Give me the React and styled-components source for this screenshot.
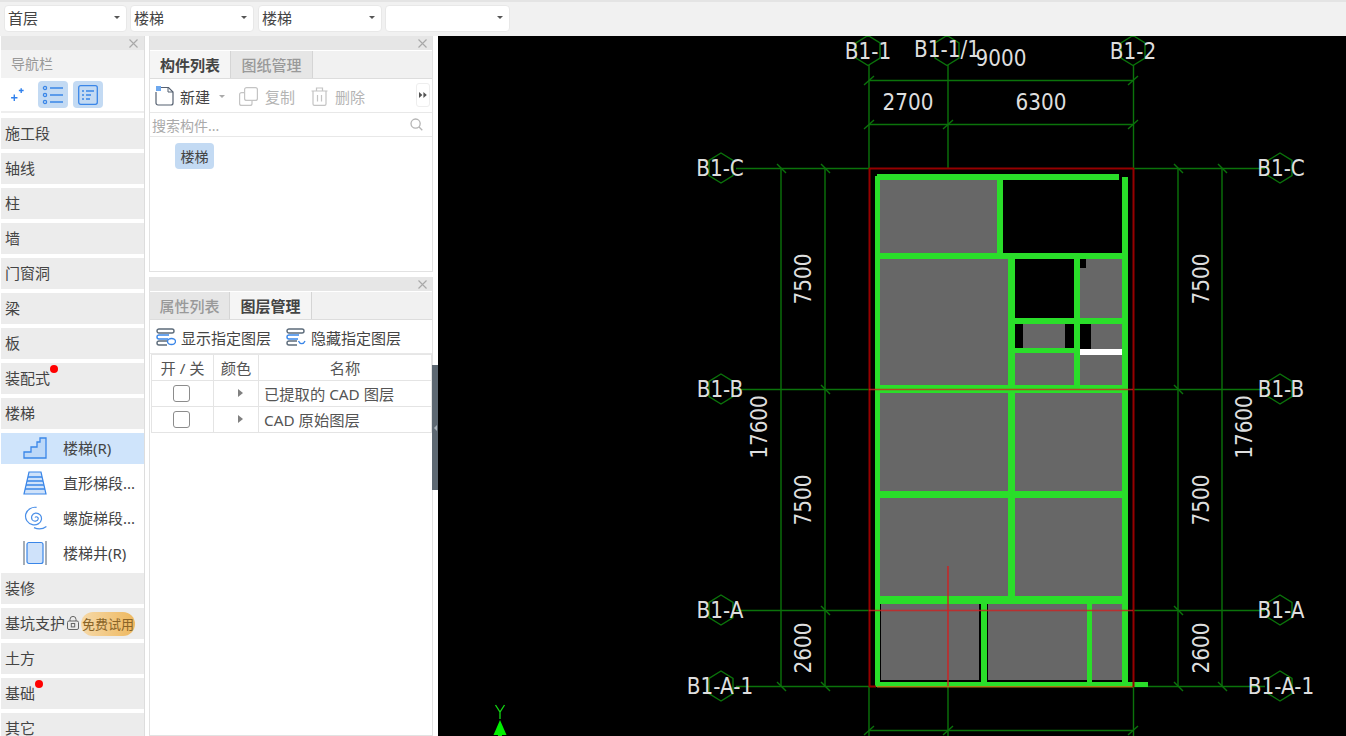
import React from "react";
import styled, { createGlobalStyle } from "styled-components";

const Global = createGlobalStyle`
  html, body { margin: 0; padding: 0; height: 736px; overflow: hidden; background: #fff; }
  * { box-sizing: border-box; }
  body { font-family: "Noto Sans", "Noto Sans CJK SC", sans-serif; color: #444; }
`;

const Page = styled.div`
  width: 1346px; height: 736px; display: flex; flex-direction: column; overflow: hidden;
`;
const TopBar = styled.div`
  height: 36px; flex: none; display: flex; align-items: flex-start; gap: 3px;
  padding: 3px 0 0 4px; background: #f1f1f1; border-top: 2px solid #e4e4e4;
`;
const Select = styled.div`
  width: ${p => p.$w}px; height: 27px; background: #fff; border: 1px solid #e8e8e8; border-radius: 4px;
  display: flex; align-items: center; padding: 0 6px 2px 3px;
  font-size: 15px; color: #444; margin-right: ${p => p.$mr || 0}px;
`;
const Caret = styled.i`
  margin-left: auto; width: 0; height: 0; border-left: 3px solid transparent; border-right: 3px solid transparent;
  border-top: 3px solid ${p => p.$c || "#555"};
`;
const Main = styled.div`
  flex: 1; min-height: 0; display: flex; background: #fff;
`;
const Left = styled.aside`
  width: 144px; flex: none; margin-left: 1px; border-right: 1px solid #ddd; overflow: hidden; background: #fff;
`;
const CloseBar = styled.div`
  height: 14px; background: #e6e6e6; display: flex; justify-content: flex-end; align-items: center;
  padding-right: ${p => p.$pr || 6}px;
`;
const NavTitle = styled.div`
  height: 28px; background: #f2f2f2; font-size: 14px; color: #999; padding: 0 0 2px 10px;
  display: flex; align-items: center;
`;
const NavTools = styled.div`
  height: 35px; display: flex; align-items: center; padding-left: 9px; border-bottom: 2px solid #eee;
`;
const ToolBtn = styled.div`
  width: 30px; height: 27px; border-radius: 4px; background: #c3daf3; display: flex; align-items: center; justify-content: center;
  margin-left: ${p => p.$ml}px;
`;
const Groups = styled.div`
  display: flex; flex-direction: column; padding-top: 5px;
`;
const Group = styled.div`
  position: relative; height: 31px; margin-bottom: 4px; background: #ececec; font-size: 15px; color: #444;
  display: flex; align-items: center; padding: 0 0 2px 4px; white-space: nowrap;
`;
const Dot = styled.i`
  position: absolute; left: ${p => p.$x}px; top: 2px; width: 8px; height: 8px; border-radius: 50%; background: #f00;
`;
const Item = styled.div`
  height: 31px; margin-bottom: 4px; display: flex; align-items: center; font-size: 15px; color: #444; padding-bottom: 2px;
  background: ${p => (p.$on ? "#cfe4fb" : "transparent")}; white-space: nowrap;
`;
const ItemIcon = styled.span`
  width: 62px; flex: none; display: flex; justify-content: center; padding-left: 5px;
`;
const Lock = styled.span`
  display: inline-flex; margin: 0 2px;
`;
const Trial = styled.span`
  height: 24px; width: 54px; border-radius: 12px; background: linear-gradient(90deg, #f6d9a8, #eeb85f);
  color: #8a6428; font-size: 13px; line-height: 24px; text-align: center; margin-top: 2px;
`;
const Middle = styled.div`
  width: 284px; flex: none; margin-left: 4px; display: flex; flex-direction: column; gap: 5px;
`;
const Panel = styled.section`
  height: ${p => (p.$h ? p.$h + "px" : "auto")}; flex: ${p => (p.$h ? "none" : 1)};
  border: 1px solid #e2e2e2; border-top: 0; display: flex; flex-direction: column; min-height: 0;
`;
const TabRow = styled.div`
  height: 28px; margin-top: 1px; flex: none; display: flex; background: #f1f1f1; border-bottom: 1px solid #ddd;
`;
const Tab = styled.div`
  width: ${p => p.$w}px; font-size: 15px; font-weight: ${p => (p.$on ? 700 : 500)};
  color: ${p => (p.$on ? "#444" : "#999")}; background: ${p => (p.$on ? "#f5f5f5" : "#e6e6e6")};
  border-right: 1px solid #d5d5d5; display: flex; align-items: center; justify-content: center;
`;
const Tools = styled.div`
  height: 34px; flex: none; display: flex; align-items: center; padding: 1px 0 0 5px; border-bottom: 1px solid #e8e8e8; position: relative;
`;
const Tool = styled.span`
  display: flex; align-items: center; gap: ${p => p.$g ?? 7}px; font-size: 15px; color: ${p => (p.$off ? "#b4b4b4" : "#444")};
  margin-left: ${p => p.$ml || 0}px;
`;
const More = styled.span`
  position: absolute; right: 2px; top: 4px; width: 14px; height: 24px; border: 1px solid #eee; border-radius: 3px; background: #fff;
  display: flex; align-items: center; justify-content: center;
`;
const Search = styled.div`
  height: 24px; flex: none; display: flex; align-items: center; justify-content: space-between;
  padding: 0 9px 0 2px; font-size: 14px; color: #aaa; border-bottom: 1px solid #e8e8e8;
`;
const TagWrap = styled.div`
  padding: 6px 0 0 25px;
`;
const Tag = styled.span`
  display: inline-flex; width: 39px; height: 26px; background: #c3daf3; border-radius: 4px; font-size: 14px;
  align-items: center; justify-content: center; color: #444;
`;
const Table = styled.div`
  display: grid; grid-template-columns: 63px 45px 173px; grid-auto-rows: 26px; margin-left: 1px; width: 281px;
  border-top: 1px solid #e6e6e6;
`;
const Cell = styled.div`
  border-right: 1px solid #e4e4e4; border-bottom: 1px solid #e4e4e4; border-left: ${p => (p.$first ? "1px solid #e4e4e4" : 0)};
  font-size: 15.3px; color: #555; display: flex; align-items: center; padding-bottom: 1px;
  justify-content: ${p => (p.$start ? "flex-start" : "center")}; padding-left: ${p => (p.$start ? 5 : 0)}px; white-space: nowrap;
`;
const Check = styled.i`
  width: 17px; height: 17px; margin: 1px 3px 0 0; border: 1px solid #8c8c8c; border-radius: 3px; background: #fff;
`;
const Tri = styled.i`
  margin-left: 8px; width: 0; height: 0; border-top: 4px solid transparent; border-bottom: 4px solid transparent; border-left: 5px solid #808080;
`;
const Splitter = styled.div`
  width: 5px; flex: none; background: #fff; position: relative;
`;
const Handle = styled.div`
  position: absolute; left: -1px; top: 329px; width: 6px; height: 125px; background: #5d6872;
  display: flex; align-items: center; justify-content: center;
`;
const HandleArrow = styled.i`
  width: 0; height: 0; border-top: 3px solid transparent; border-bottom: 3px solid transparent; border-right: 3px solid #aab2ba;
`;
const Canvas = styled.div`
  flex: 1; min-width: 0; background: #000; overflow: hidden;
`;
const Drawing = styled.svg`
  display: block;
  text { font-family: "DejaVu Sans", sans-serif; font-size: 23px; fill: #dedede; }
`;

const Close = () => (
  <svg width="9" height="9" viewBox="0 0 9 9" stroke="#a8a8a8" strokeWidth="1.1"><path d="M.5 .5L8.5 8.5M8.5 .5L.5 8.5" /></svg>
);

/* drawing data in page pixels */
const GREY = [
  [880, 180, 117, 73], [880, 259, 128, 126], [1080, 259, 42, 59], [1015, 324, 59, 24], [1080, 324, 42, 25],
  [1015, 353, 59, 32], [1080, 355, 42, 30], [880, 393, 128, 98], [1015, 393, 107, 98], [880, 498, 128, 98],
  [1015, 498, 107, 98], [881, 604, 98, 76], [988, 604, 99, 76], [1092, 604, 30, 76],
];
const BLACK = [
  [1080, 259, 6, 9], [1015, 324, 8, 24], [1065, 324, 9, 24], [1080, 324, 11, 25],
];
const WALLS = [
  [875, 176, 5, 511], [877, 174, 242, 6], [1122, 177, 6, 510], [997, 178, 6, 77], [876, 253, 250, 6],
  [1008, 257, 7, 340], [1074, 257, 6, 128], [1015, 318, 107, 6], [1015, 348, 59, 5], [877, 385, 250, 8],
  [877, 491, 248, 7], [877, 596, 248, 8], [981, 604, 6, 80], [1087, 604, 5, 80], [875, 682, 273, 5],
];
const GRID = "#0b730b";
const HEX = [
  [868, 50.5], [947, 50.5], [1133, 50.5],
  [721, 168], [1280, 168], [721, 389], [1280, 389], [721, 610], [1280, 610], [721, 686], [1280, 686],
];
const hexPts = (cx, cy, r = 15) =>
  [0, 1, 2, 3, 4, 5].map(i => {
    const a = (Math.PI / 3) * i - Math.PI / 2;
    return `${(cx + r * Math.cos(a) * 0.92).toFixed(1)},${(cy + r * Math.sin(a)).toFixed(1)}`;
  }).join(" ");
const LABELS = [
  ["B1-1", 868, 51], ["B1-1/1", 947, 49], ["9000", 1001, 58], ["B1-2", 1133, 51],
  ["2700", 908, 102], ["6300", 1041, 102],
  ["B1-C", 720, 168], ["B1-C", 1281, 168], ["B1-B", 720, 389], ["B1-B", 1281, 389],
  ["B1-A", 720, 610], ["B1-A", 1281, 610], ["B1-A-1", 720, 686], ["B1-A-1", 1281, 686],
];
const ROTATED = [
  ["7500", 803, 279], ["17600", 759, 427], ["7500", 803, 500], ["2600", 803, 648],
  ["7500", 1201, 279], ["17600", 1244, 427], ["7500", 1201, 500], ["2600", 1201, 648],
];
const V_TICKS = [
  [781, 168], [781, 686], [825, 168], [825, 389], [825, 610], [825, 686],
  [1178, 168], [1178, 389], [1178, 610], [1178, 686], [1222, 168], [1222, 686],
];
const H_TICKS = [
  [869, 80], [1133, 80], [869, 124], [948, 124], [1133, 124], [869, 730], [948, 730], [1133, 730],
];

const Plan = () => (
  <Drawing width="908" height="700" viewBox="438 36 908 700">
    <g stroke={GRID} strokeWidth="1.4" fill="none">
      <path d="M869 65V168M948 65V168M1133.5 65V168M869 686V736M948 686V736M1133.5 686V736" />
      <path d="M869 80.5H1133M869 124.5H1133M869 730.5H1133" />
      <path d="M736 168.5H869M1133 168.5H1265M736 389.5H869M1133 389.5H1265M736 610.5H869M1133 610.5H1265M736 686.5H869M1133 686.5H1265" />
      <path d="M781 168V686M825 168V686M1178 168V686M1222 168V686" />
      {V_TICKS.map(([x, y]) => <path key={`v${x}${y}`} d={`M${x - 4} ${y - 4}L${x + 5} ${y + 5}`} />)}
      {H_TICKS.map(([x, y]) => <path key={`h${x}${y}`} d={`M${x - 5} ${y + 5}L${x + 5} ${y - 4}`} />)}
      {HEX.map(([x, y]) => <polygon key={`${x}${y}`} points={hexPts(x, y)} />)}
    </g>
    {GREY.map(([x, y, w, h]) => <rect key={`g${x}${y}`} x={x} y={y} width={w} height={h} fill="#676767" />)}
    {BLACK.map(([x, y, w, h]) => <rect key={`b${x}${y}`} x={x} y={y} width={w} height={h} fill="#000" />)}
    <rect x="1080" y="349" width="42" height="6" fill="#fff" />
    {WALLS.map(([x, y, w, h]) => <rect key={`w${x}${y}`} x={x} y={y} width={w} height={h} fill="#2ade2a" />)}
    <rect x="877" y="686" width="256" height="1.5" fill="#a87e14" />
    <path d="M869.5 168V687M1133.5 168V687M869 168.5H1134M869 686.5H876" stroke="#950000" strokeWidth="2" fill="none" />
    <g fill="none" strokeWidth="1.4" stroke="#d02222">
      <path d="M869 389.5H1133M869 610.5H1133" opacity="0.8" />
      <path d="M948 566V686" />
    </g>
    {LABELS.map(([t, x, y], i) => (
      <text key={i} transform={`translate(${x} ${y}) scale(.87 1)`} textAnchor="middle" dominantBaseline="central">{t}</text>
    ))}
    {ROTATED.map(([t, x, y], i) => (
      <text key={i} transform={`translate(${x} ${y}) rotate(-90) scale(.87 1)`} textAnchor="middle" dominantBaseline="central">{t}</text>
    ))}
    <path d="M495.5 705L500 712L504.5 705M500 712V719" stroke="#12d812" strokeWidth="1.3" fill="none" />
    <path d="M500 720L506.5 735H502V736H498V735H493.5Z" fill="#00f000" />
  </Drawing>
);

const IconSpark = () => (
  <svg width="16" height="17" viewBox="0 0 14 16" fill="none" stroke="#2f80ed" strokeWidth="1.3">
    <path d="M3.5 8V14M.5 11H6.5M10 2V6.5M7.8 4.2H12.3" />
  </svg>
);
const IconList = () => (
  <svg width="22" height="20" viewBox="0 0 22 20" fill="none" stroke="#3a86e8" strokeWidth="1.3">
    <circle cx="3" cy="3" r="1.6" /><circle cx="3" cy="10" r="1.6" /><circle cx="3" cy="17" r="1.6" />
    <path d="M8 3H21M8 10H21M8 17H21" />
  </svg>
);
const IconForm = () => (
  <svg width="20" height="20" viewBox="0 0 20 20" fill="none" stroke="#3a86e8" strokeWidth="1.3">
    <rect x=".7" y=".7" width="18.6" height="18.6" rx="2" />
    <path d="M4 6H6M8 6H16M4 10H6M8 10H13M4 14H6M8 14H12" />
  </svg>
);
const IconStair = () => (
  <svg width="24" height="22" viewBox="0 0 24 22">
    <path d="M1 21V15H8V10H14V5H17V1H23V21Z" fill="#bcd8f8" stroke="#3a86e8" strokeWidth="1.3" />
  </svg>
);
const IconRun = () => (
  <svg width="24" height="24" viewBox="0 0 24 24" fill="#cfe2fa" stroke="#3a86e8" strokeWidth="1.2">
    <path d="M6 1H18L23 23H1Z" />
    <path d="M5 6H19M4 10H20M3 14H21M2 18H22" strokeWidth="1.6" />
  </svg>
);
const IconSpiral = () => (
  <svg width="24" height="24" viewBox="0 0 24 24" fill="none" stroke="#4a8fe8" strokeWidth="1.2">
    <path d="M12 11.5C13 10 15.5 11 15.2 13C14.8 15.4 11 16 9.4 14C7.6 11.6 9 7.6 12.4 7.2C16.4 6.8 19 10.2 18.4 13.6C17.8 17.4 13.6 19.6 9.4 18.6C4.6 17.4 1.6 13 2.8 8C4 3.4 9 .6 13.6 1.4M11 21.6C15 23.4 20 23 23.4 20.4" />
  </svg>
);
const IconWell = () => (
  <svg width="24" height="24" viewBox="0 0 24 24">
    <rect x="4" y="1.5" width="16" height="21" rx="2" fill="#cfe2fa" stroke="#3a86e8" strokeWidth="1.2" />
    <path d="M1 0V24M23 0V24" stroke="#6c7885" strokeWidth="1.2" />
  </svg>
);
const IconLock = () => (
  <svg width="12" height="14" viewBox="0 0 12 14" fill="none" stroke="#666" strokeWidth="1">
    <rect x=".5" y="5" width="11" height="8.5" rx="1.5" /><path d="M3 5V3.4a3 3 0 0 1 6 0V5" /><rect x="4.3" y="7.5" width="3.4" height="3.4" />
  </svg>
);
const IconNew = () => (
  <svg width="19" height="20" viewBox="0 0 19 20" fill="none">
    <path d="M5 1.5H13.5L18 6V17a2 2 0 0 1-2 2H3a2 2 0 0 1-2-2V6" stroke="#556070" strokeWidth="1.2" />
    <path d="M13 1.5V6H18" stroke="#556070" strokeWidth="1" />
    <rect x="1" y="0" width="5" height="5" fill="#6ea8ee" />
  </svg>
);
const IconCopy = () => (
  <svg width="19" height="19" viewBox="0 0 19 19" fill="none" stroke="#c4c4c4" strokeWidth="1.2">
    <rect x="5.6" y=".6" width="12.8" height="12.8" rx="2" /><path d="M5.6 5.6H2.6a2 2 0 0 0-2 2V16.4a2 2 0 0 0 2 2H11a2 2 0 0 0 2-2V13.4" />
  </svg>
);
const IconTrash = () => (
  <svg width="17" height="19" viewBox="0 0 17 19" fill="none" stroke="#c4c4c4" strokeWidth="1.2">
    <path d="M.5 4H16.5M5.5 4V1H11.5V4M2 4V17a1.4 1.4 0 0 0 1.4 1.4H13.6A1.4 1.4 0 0 0 15 17V4M6.5 8V14.5M10.5 8V14.5" />
  </svg>
);
const IconSearch = () => (
  <svg width="13" height="13" viewBox="0 0 13 13" fill="none" stroke="#b5b5b5" strokeWidth="1.3">
    <circle cx="5.6" cy="5.6" r="4.6" /><path d="M9 9L12.3 12.3" />
  </svg>
);
const IconMore = () => (
  <svg width="8" height="6" viewBox="0 0 8 6" fill="#555"><path d="M0 0L3.4 3L0 6ZM4.4 0L7.8 3L4.4 6Z" /></svg>
);
const IconLayer = ({ hide }) => (
  <svg width="20" height="18" viewBox="0 0 20 18" fill="none" strokeWidth="1.4">
    <rect x="1" y="1" width="17" height="4" rx="2" stroke="#5c6b7a" />
    <path d="M13 7H3a2 2 0 0 0 0 4H12" stroke="#3a86e8" />
    <path d="M11 13H3a2 2 0 0 0 0 4H11" stroke="#5c6b7a" />
    {hide
      ? <path d="M12.5 13C14 16.5 17.5 16.5 19 13" stroke="#3a86e8" />
      : <ellipse cx="15.5" cy="13.5" rx="4" ry="3" stroke="#3a86e8" />}
  </svg>
);

const before = ["施工段", "轴线", "柱", "墙", "门窗洞", "梁", "板"];

export default function App() {
  return (
    <Page>
      <Global />
      <TopBar>
        <Select $w={123}>首层<Caret /></Select>
        <Select $w={124} $mr={1}>楼梯<Caret /></Select>
        <Select $w={124}>楼梯<Caret /></Select>
        <Select $w={125}><Caret /></Select>
      </TopBar>
      <Main>
        <Left>
          <CloseBar><Close /></CloseBar>
          <NavTitle>导航栏</NavTitle>
          <NavTools>
            <IconSpark />
            <ToolBtn $ml={12}><IconList /></ToolBtn>
            <ToolBtn $ml={5}><IconForm /></ToolBtn>
          </NavTools>
          <Groups>
            {before.map(t => <Group key={t}>{t}</Group>)}
            <Group>装配式<Dot $x={49} /></Group>
            <Group>楼梯</Group>
            <Item $on><ItemIcon><IconStair /></ItemIcon>楼梯(R)</Item>
            <Item><ItemIcon><IconRun /></ItemIcon>直形梯段...</Item>
            <Item><ItemIcon><IconSpiral /></ItemIcon>螺旋梯段...</Item>
            <Item><ItemIcon><IconWell /></ItemIcon>楼梯井(R)</Item>
            <Group>装修</Group>
            <Group>基坑支护<Lock><IconLock /></Lock><Trial>免费试用</Trial></Group>
            <Group>土方</Group>
            <Group>基础<Dot $x={34} /></Group>
            <Group>其它</Group>
          </Groups>
        </Left>
        <Middle>
          <Panel $h={236}>
            <CloseBar $pr={5}><Close /></CloseBar>
            <TabRow>
              <Tab $w={81} $on>构件列表</Tab>
              <Tab $w={82}>图纸管理</Tab>
            </TabRow>
            <Tools>
              <Tool $g={6}><IconNew />新建</Tool>
              <Tool $ml={9}><Caret $c="#aaa" /></Tool>
              <Tool $off $ml={14}><IconCopy />复制</Tool>
              <Tool $off $ml={16}><IconTrash />删除</Tool>
              <More><IconMore /></More>
            </Tools>
            <Search>搜索构件...<IconSearch /></Search>
            <TagWrap><Tag>楼梯</Tag></TagWrap>
          </Panel>
          <Panel>
            <CloseBar $pr={5}><Close /></CloseBar>
            <TabRow>
              <Tab $w={80}>属性列表</Tab>
              <Tab $w={82} $on>图层管理</Tab>
            </TabRow>
            <Tools>
              <Tool $g={5} $ml={1}><IconLayer />显示指定图层</Tool>
              <Tool $g={5} $ml={15}><IconLayer hide />隐藏指定图层</Tool>
            </Tools>
            <Table>
              <Cell $first>开 / 关</Cell><Cell>颜色</Cell><Cell>名称</Cell>
              <Cell $first><Check /></Cell><Cell><Tri /></Cell><Cell $start>已提取的 CAD 图层</Cell>
              <Cell $first><Check /></Cell><Cell><Tri /></Cell><Cell $start>CAD 原始图层</Cell>
            </Table>
          </Panel>
        </Middle>
        <Splitter><Handle><HandleArrow /></Handle></Splitter>
        <Canvas><Plan /></Canvas>
      </Main>
    </Page>
  );
}
